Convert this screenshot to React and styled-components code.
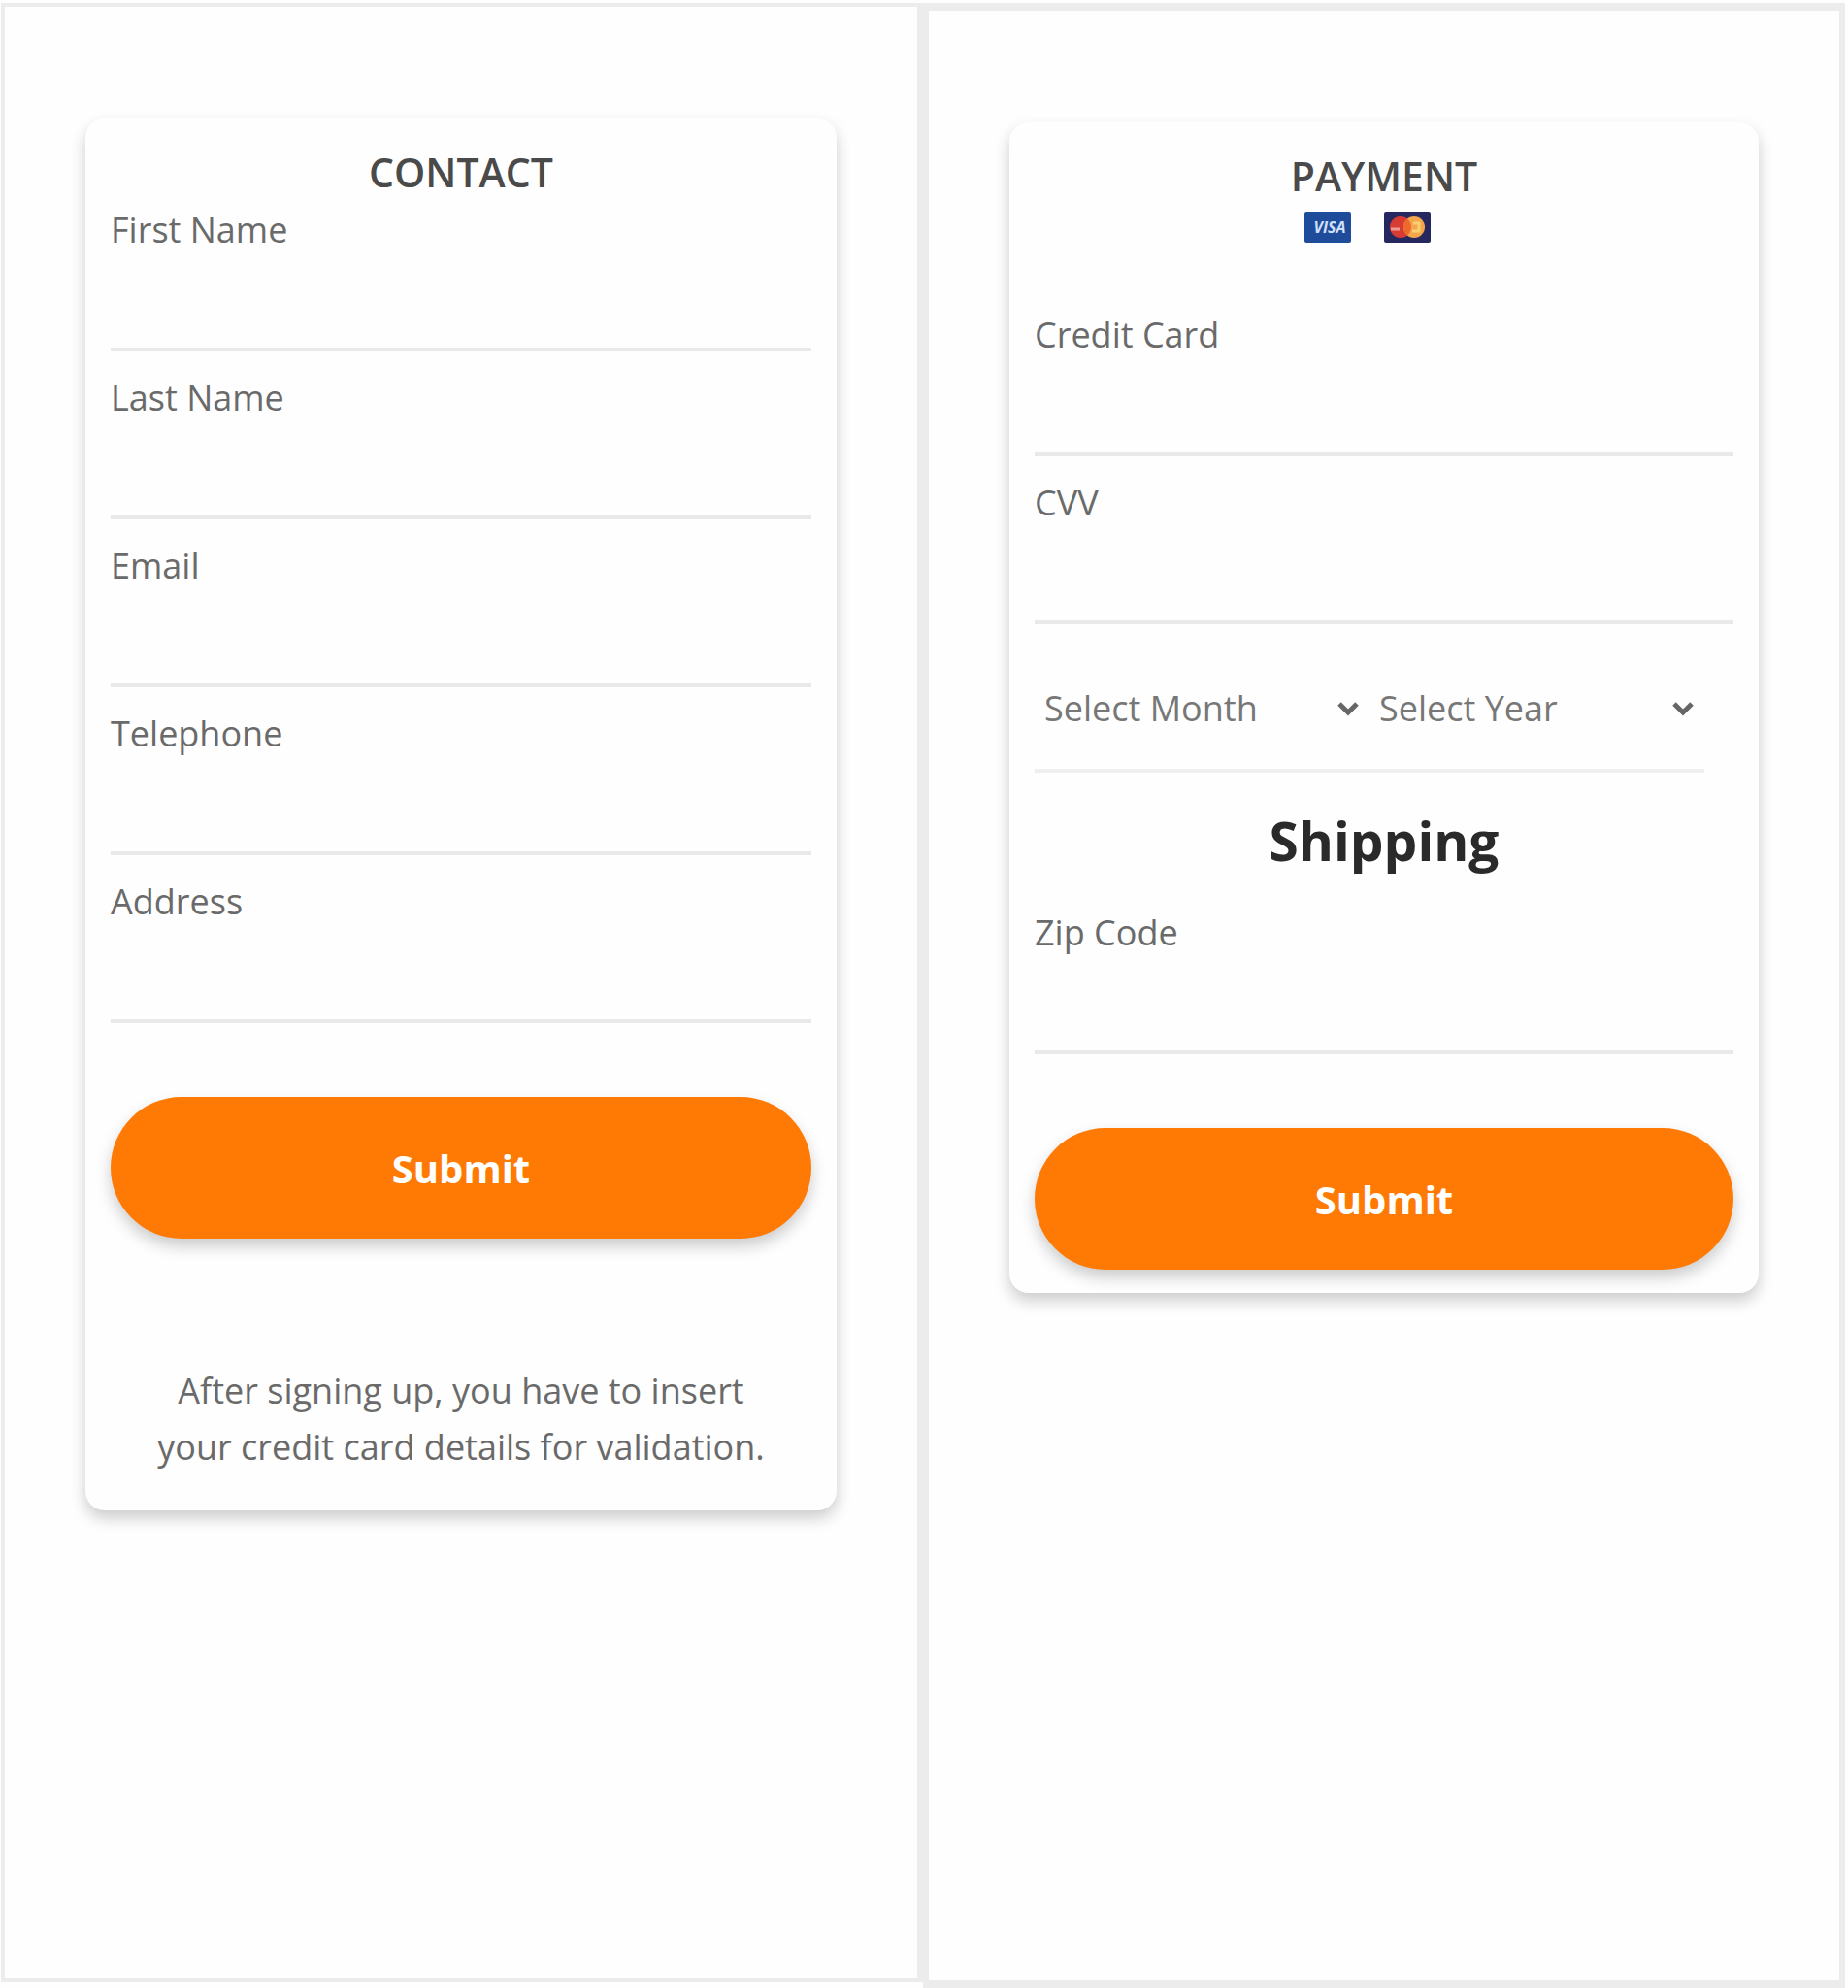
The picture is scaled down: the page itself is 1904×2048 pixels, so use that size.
import styled, { createGlobalStyle } from "styled-components";

const GlobalStyle = createGlobalStyle`
  * {
    box-sizing: border-box;
  }
  body {
    margin: 0;
    background-color: #fefefe;
    font-family: "Open Sans", "Noto Sans", sans-serif;
    color: #6a6a6a;
  }
`;

const Container = styled.main`
  display: grid;
  grid-template-columns: 1fr 1fr;
  min-height: 100vh;
  padding: 3px 3px 0 1px;
`;

const Panel = styled.section`
  border-style: solid;
  border-color: #ececec;
  border-width: ${(props) => (props.$thick ? "8px 6px 8px 6px" : "4px 6px 4px 4px")};
  margin-bottom: ${(props) => (props.$thick ? "0" : "6px")};
  padding: 115px 83px;
`;

const Card = styled.form`
  display: flex;
  flex-direction: column;
  padding: 24px 26px;
  border-radius: 20px;
  background-color: #fefefe;
  box-shadow: 0 8px 16px rgba(0, 0, 0, 0.2);
`;

const Title = styled.h1`
  margin: 0 0 4px;
  font-size: 41px;
  font-weight: 600;
  line-height: 62px;
  text-align: center;
  color: #4a4a4a;
`;

const SubTitle = styled.h2`
  margin: 32px 0;
  font-size: 55px;
  font-weight: 700;
  line-height: 76px;
  text-align: center;
  color: #2a2a2a;
`;

const Cards = styled.div`
  display: flex;
  justify-content: center;
  margin: 2px 0 70px;
`;

const CardIcon = styled.svg`
  width: 48px;
  height: 32px;
  margin-right: 34px;
`;

const Fields = styled.div`
  display: flex;
  flex-direction: column;
  gap: 23px;
`;

const Field = styled.div`
  display: flex;
  flex-direction: column;
`;

const Label = styled.label`
  font-size: 36px;
  line-height: 50px;
`;

const Input = styled.input`
  width: 100%;
  height: 100px;
  padding: 0 12px;
  border: none;
  border-bottom: 4px solid #e9e9e9;
  background: transparent;
  font: inherit;
  font-size: 36px;
  color: inherit;
  outline: none;
`;

const Selects = styled.div`
  display: flex;
  margin-right: 30px;
`;

const SelectBox = styled.div`
  position: relative;
  flex: 1;
`;

const Select = styled.select`
  appearance: none;
  width: 100%;
  height: 130px;
  padding: 0 40px 0 10px;
  border: none;
  border-bottom: 4px solid #efefef;
  border-radius: 0;
  background: transparent;
  font: inherit;
  font-size: 36px;
  color: #777;
  outline: none;
`;

const Arrow = styled.svg`
  position: absolute;
  top: 56px;
  right: 10px;
  width: 24px;
  height: 16px;
  pointer-events: none;
`;

const Button = styled.button`
  height: 146px;
  margin-top: 76px;
  border: none;
  border-radius: 73px;
  background-color: #ff7a05;
  box-shadow: 0 8px 16px rgba(0, 0, 0, 0.2);
  font: inherit;
  font-size: 40px;
  font-weight: 700;
  color: white;
  cursor: pointer;
`;

const Note = styled.p`
  margin: 128px 0 12px;
  padding: 0 40px;
  font-size: 36px;
  line-height: 58px;
  text-align: center;
`;

const contactFields = [
  { id: "firstName", label: "First Name", type: "text" },
  { id: "lastName", label: "Last Name", type: "text" },
  { id: "email", label: "Email", type: "email" },
  { id: "telephone", label: "Telephone", type: "tel" },
  { id: "address", label: "Address", type: "text" },
];

const TextField = ({ id, label, type = "text" }) => (
  <Field>
    <Label htmlFor={id}>{label}</Label>
    <Input id={id} name={id} type={type} />
  </Field>
);

const DateSelect = ({ id, label, options }) => (
  <SelectBox>
    <Select id={id} name={id} aria-label={label} defaultValue="">
      <option value="">{label}</option>
      {options.map((o) => (
        <option key={o} value={o}>
          {o}
        </option>
      ))}
    </Select>
    <Arrow viewBox="0 0 24 16" fill="none" aria-hidden="true">
      <path d="M3 3l9 9 9-9" stroke="#666" strokeWidth="5" />
    </Arrow>
  </SelectBox>
);

const Visa = () => (
  <CardIcon viewBox="0 0 48 32" role="img" aria-label="Visa">
    <rect width="48" height="32" rx="2" fill="#1f4b9b" />
    <text
      x="26"
      y="22"
      textAnchor="middle"
      fontFamily="Open Sans"
      fontSize="16"
      fontWeight="700"
      fontStyle="italic"
      fill="#cfe0fa"
    >
      VISA
    </text>
  </CardIcon>
);

const Mastercard = () => (
  <CardIcon viewBox="0 0 48 32" role="img" aria-label="Mastercard">
    <rect width="48" height="32" rx="2" fill="#25285e" />
    <circle cx="17" cy="16" r="11" fill="#d63c34" />
    <circle cx="31" cy="16" r="11" fill="#f3a64a" />
    <path d="M24 7.500a11 11 0 0 1 0 17a11 11 0 0 1 0-17z" fill="#ee6a2c" />
    <path d="M7 18h9" stroke="#ee9a94" strokeWidth="3" fill="none" />
    <path d="M30 12h6v8h-7" stroke="#f9cf72" strokeWidth="3" fill="none" />
  </CardIcon>
);

const months = ["01", "02", "03", "04", "05", "06", "07", "08", "09", "10", "11", "12"];
const years = ["2022", "2023", "2024", "2025", "2026"];

const Contact = () => (
  <Card onSubmit={(e) => e.preventDefault()}>
    <Title>CONTACT</Title>
    <Fields>
      {contactFields.map((f) => (
        <TextField key={f.id} {...f} />
      ))}
    </Fields>
    <Button type="submit">Submit</Button>
    <Note>After signing up, you have to insert your credit card details for validation.</Note>
  </Card>
);

const Payment = () => (
  <Card onSubmit={(e) => e.preventDefault()}>
    <Title>PAYMENT</Title>
    <Cards>
      <Visa />
      <Mastercard />
    </Cards>
    <Fields>
      <TextField id="creditCard" label="Credit Card" />
      <TextField id="cvv" label="CVV" />
      <Selects>
        <DateSelect id="month" label="Select Month" options={months} />
        <DateSelect id="year" label="Select Year" options={years} />
      </Selects>
    </Fields>
    <SubTitle>Shipping</SubTitle>
    <TextField id="zipCode" label="Zip Code" />
    <Button type="submit">Submit</Button>
  </Card>
);

const App = () => {
  return (
    <>
      <GlobalStyle />
      <Container>
        <Panel>
          <Contact />
        </Panel>
        <Panel $thick>
          <Payment />
        </Panel>
      </Container>
    </>
  );
};

export default App;
